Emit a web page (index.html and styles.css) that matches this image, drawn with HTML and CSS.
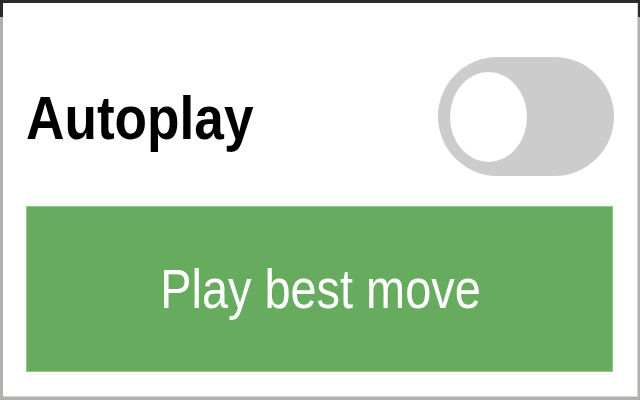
FILE: index.html
```html
<!DOCTYPE html>
<html>
<head>
<meta charset="utf-8">
<link rel="stylesheet" href="styles.css">
</head>
<body>
<div class="frame">
  <div class="panel">
    <div class="row">
      <span class="label">Autoplay</span>
      <div class="toggle"><div class="knob"></div></div>
    </div>
    <button class="play"><span class="play-text">Play best move</span></button>
  </div>
</div>
</body>
</html>
```
FILE: styles.css
```css
html, body {
  margin: 0;
  padding: 0;
}
body {
  width: 640px;
  height: 400px;
  overflow: hidden;
  background: linear-gradient(to bottom, #2b2b2b 0, #2b2b2b 17px, #b3afaa 17px, #b3afaa 100%);
  font-family: "Liberation Sans", Arial, sans-serif;
}
.frame {
  padding: 3px 2px 2px 3px;
  height: 400px;
  box-sizing: border-box;
}
.panel {
  background: #ffffff;
  height: 394px;
  box-sizing: border-box;
  border-right: 1px solid #d6d6d6;
  border-bottom: 1px solid #d6d6d6;
  padding: 54px 23px 0 23px;
  display: flex;
  flex-direction: column;
  gap: 30px;
}
.row {
  display: flex;
  justify-content: space-between;
  align-items: center;
  height: 119px;
}
.label {
  display: inline-block;
  font-weight: bold;
  font-size: 53.2px;
  color: #000;
  transform: scaleY(1.15);
  margin-top: 2px;
}
.toggle {
  width: 176px;
  height: 119px;
  border-radius: 60px / 60px;
  background: #cccccc;
  display: flex;
  align-items: center;
  padding-left: 12px;
  box-sizing: border-box;
}
.knob {
  width: 77px;
  height: 90px;
  border-radius: 50%;
  background: #ffffff;
}
.play {
  height: 166px;
  width: 587px;
  background: #67ab5e;
  border: 1px solid #8fcb87;
  margin: 0;
  padding: 0;
  display: flex;
  align-items: center;
  justify-content: center;
  box-sizing: border-box;
}
.play-text {
  display: inline-block;
  font-family: "Liberation Sans", Arial, sans-serif;
  font-size: 46.9px;
  color: #ffffff;
  transform: scaleY(1.17);
  margin-left: 2px;
}
```
